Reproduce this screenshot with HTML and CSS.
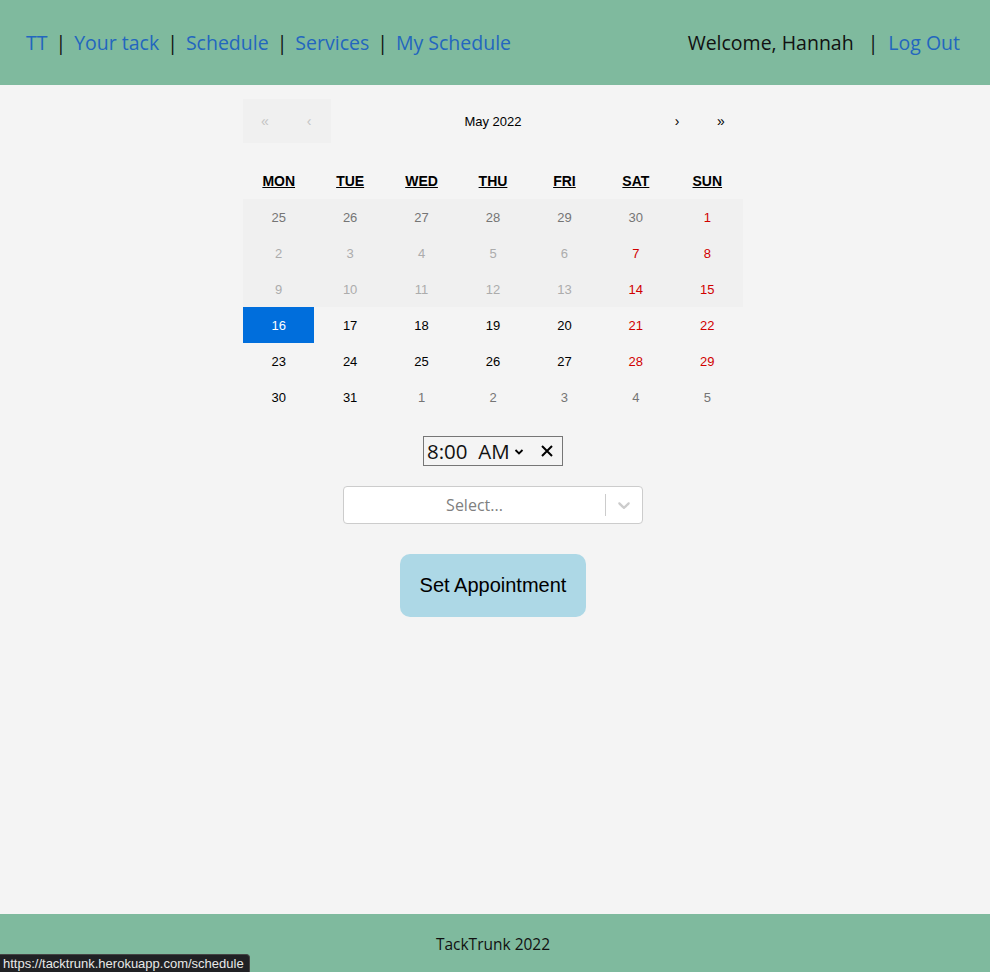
FILE: index.html
```html
<!DOCTYPE html>
<html lang="en">
<head>
<meta charset="utf-8">
<title>TackTrunk - Schedule</title>
<link rel="stylesheet" href="styles.css">
</head>
<body>
<div class="page">
  <header class="topbar">
    <nav class="nav">
      <a href="#">TT</a><span class="sep">|</span>
      <a href="#">Your tack</a><span class="sep">|</span>
      <a href="#">Schedule</a><span class="sep">|</span>
      <a href="#">Services</a><span class="sep">|</span>
      <a href="#">My Schedule</a>
    </nav>
    <div class="user">
      <span class="welcome">Welcome, Hannah</span><span class="sep">|</span>
      <a href="#">Log Out</a>
    </div>
  </header>

  <main class="main">
    <div class="calendar">
      <div class="cal-nav">
        <button class="nav-btn disabled">«</button>
        <button class="nav-btn disabled">‹</button>
        <span class="cal-label">May 2022</span>
        <button class="nav-btn">›</button>
        <button class="nav-btn">»</button>
      </div>
      <div class="weekdays">
        <div><abbr>MON</abbr></div>
        <div><abbr>TUE</abbr></div>
        <div><abbr>WED</abbr></div>
        <div><abbr>THU</abbr></div>
        <div><abbr>FRI</abbr></div>
        <div><abbr>SAT</abbr></div>
        <div><abbr>SUN</abbr></div>
      </div>
      <div class="days">
        <div class="tile off neighbor">25</div>
        <div class="tile off neighbor">26</div>
        <div class="tile off neighbor">27</div>
        <div class="tile off neighbor">28</div>
        <div class="tile off neighbor">29</div>
        <div class="tile off neighbor">30</div>
        <div class="tile off weekend">1</div>

        <div class="tile off">2</div>
        <div class="tile off">3</div>
        <div class="tile off">4</div>
        <div class="tile off">5</div>
        <div class="tile off">6</div>
        <div class="tile off weekend">7</div>
        <div class="tile off weekend">8</div>

        <div class="tile off">9</div>
        <div class="tile off">10</div>
        <div class="tile off">11</div>
        <div class="tile off">12</div>
        <div class="tile off">13</div>
        <div class="tile off weekend">14</div>
        <div class="tile off weekend">15</div>

        <div class="tile active">16</div>
        <div class="tile">17</div>
        <div class="tile">18</div>
        <div class="tile">19</div>
        <div class="tile">20</div>
        <div class="tile weekend">21</div>
        <div class="tile weekend">22</div>

        <div class="tile">23</div>
        <div class="tile">24</div>
        <div class="tile">25</div>
        <div class="tile">26</div>
        <div class="tile">27</div>
        <div class="tile weekend">28</div>
        <div class="tile weekend">29</div>

        <div class="tile">30</div>
        <div class="tile">31</div>
        <div class="tile neighbor">1</div>
        <div class="tile neighbor">2</div>
        <div class="tile neighbor">3</div>
        <div class="tile neighbor">4</div>
        <div class="tile neighbor">5</div>
      </div>
    </div>

    <div class="timepicker">
      <span class="time-text">8:00&nbsp; AM</span>
      <svg class="chev-small" width="10" height="8" viewBox="0 0 10 8"><path d="M1.5 2 L5 5.5 L8.5 2" fill="none" stroke="#000" stroke-width="1.8"/></svg>
      <svg class="clear" width="14" height="14" viewBox="0 0 14 14"><path d="M2 2 L12 12 M12 2 L2 12" stroke="#000" stroke-width="2"/></svg>
    </div>

    <div class="select">
      <span class="placeholder">Select...</span>
      <span class="indicator-sep"></span>
      <span class="indicator">
        <svg width="20" height="20" viewBox="0 0 20 20"><path d="M4.516 7.548c0.436-0.446 1.043-0.481 1.576 0l3.908 3.747 3.908-3.747c0.533-0.481 1.141-0.446 1.574 0 0.436 0.445 0.408 1.197 0 1.615-0.406 0.418-4.695 4.502-4.695 4.502-0.217 0.223-0.502 0.335-0.787 0.335s-0.57-0.112-0.789-0.335c0 0-4.287-4.084-4.695-4.502s-0.436-1.170 0-1.615z" fill="#ccc"/></svg>
      </span>
    </div>

    <button class="set-btn">Set Appointment</button>
  </main>

  <footer class="footer">TackTrunk 2022</footer>
</div>
<div class="status">https://tacktrunk.herokuapp.com/schedule</div>
</body>
</html>
```

FILE: styles.css
```css
* { box-sizing: border-box; }
html, body { margin: 0; padding: 0; }
body {
  background: #f4f4f4;
  font-family: "Open Sans", "Noto Sans", sans-serif;
}
.page {
  min-height: 100vh;
  display: flex;
  flex-direction: column;
}
.topbar {
  height: 85px;
  background: #7fba9e;
  display: flex;
  align-items: center;
  justify-content: space-between;
  padding: 0 30px 0 26px;
  font-size: 19.5px;
}
.nav, .user {
  display: flex;
  align-items: center;
  gap: 8px;
}
.user { gap: 10px; }
.topbar a {
  color: #2366bf;
  text-decoration: none;
}
.sep { color: #111; }
.welcome { color: #111; margin-right: 4px; }

.main {
  flex: 1;
  display: flex;
  flex-direction: column;
  align-items: center;
  padding-top: 14px;
  padding-right: 4px;
}
.calendar {
  width: 500px;
  font-family: Arial, "Liberation Sans", Helvetica, sans-serif;
}
.cal-nav {
  display: flex;
  height: 44px;
  margin-bottom: 30px;
}
.nav-btn {
  width: 44px;
  height: 44px;
  border: 0;
  background: transparent;
  font-family: inherit;
  font-size: 14px;
  color: #000;
  padding: 0;
}
.nav-btn.disabled {
  background: #f0f0f0;
  color: #c4c4c4;
}
.cal-label {
  flex: 1;
  display: flex;
  align-items: center;
  justify-content: center;
  font-size: 13px;
  color: #000;
}
.weekdays {
  display: grid;
  grid-template-columns: repeat(7, 1fr);
  font-size: 14px;
  font-weight: bold;
  text-align: center;
  padding-bottom: 11px;
}
.weekdays abbr {
  text-decoration: underline;
}
.days {
  display: grid;
  grid-template-columns: repeat(7, 1fr);
  margin-top: -1px;
}
.tile {
  height: 36px;
  display: flex;
  align-items: center;
  justify-content: center;
  font-size: 13px;
  color: #000;
}
.tile.off {
  background: #f0f0f0;
  color: #acacac;
}
.tile.neighbor { color: #757575; }
.tile.weekend { color: #d10000; }
.tile.active {
  background: #006edc;
  color: #fff;
}

.timepicker {
  margin-top: 21px;
  width: 140px;
  height: 30px;
  border: 1px solid #767676;
  display: flex;
  align-items: center;
  padding-left: 3px;
  font-size: 20.5px;
  color: #111;
}
.time-text { line-height: 1; }
.chev-small { margin-left: 4px; margin-top: 2px; }
.clear { margin-left: 16px; }

.select {
  margin-top: 20px;
  width: 300px;
  height: 38px;
  background: #fff;
  border: 1px solid #ccc;
  border-radius: 4px;
  display: flex;
  align-items: center;
}
.placeholder {
  flex: 1;
  text-align: center;
  color: #808080;
  font-size: 16px;
}
.indicator-sep {
  width: 1px;
  height: 22px;
  background: #ccc;
}
.indicator {
  width: 36px;
  display: flex;
  justify-content: center;
  align-items: center;
}
.indicator svg { display: block; }

.set-btn {
  margin-top: 30px;
  width: 186px;
  height: 63px;
  background: #add8e6;
  border: 0;
  border-radius: 10px;
  font-family: Arial, "Liberation Sans", sans-serif;
  font-size: 20px;
  color: #000;
}

.footer {
  height: 58px;
  background: #7fba9e;
  display: flex;
  align-items: center;
  justify-content: center;
  font-size: 15.5px;
  color: #111;
  padding: 2px 4px 0 0;
}
.status {
  position: fixed;
  left: 0;
  bottom: 0;
  height: 18px;
  padding: 0 5px 0 3px;
  background: #202124;
  color: #e8e8e8;
  font-family: Arial, "Liberation Sans", sans-serif;
  font-size: 13px;
  line-height: 18px;
  border-top-right-radius: 4px;
  border: 1px solid #444;
  border-left: 0;
  border-bottom: 0;
}
```
